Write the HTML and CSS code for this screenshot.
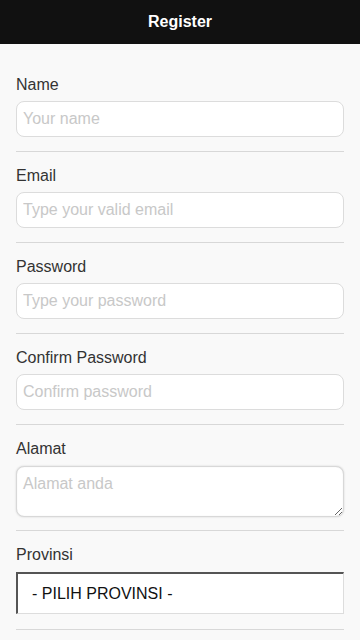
FILE: index.html
```html
<!DOCTYPE html>
<html>
<head>
<meta charset="utf-8">
<link rel="stylesheet" href="styles.css">
</head>
<body>
<header class="bar">Register</header>
<main class="form">
  <div class="field">
    <label class="label">Name</label>
    <input class="input" type="text" placeholder="Your name">
  </div>
  <div class="field">
    <label class="label">Email</label>
    <input class="input" type="text" placeholder="Type your valid email">
  </div>
  <div class="field">
    <label class="label">Password</label>
    <input class="input" type="password" placeholder="Type your password">
  </div>
  <div class="field">
    <label class="label">Confirm Password</label>
    <input class="input" type="password" placeholder="Confirm password">
  </div>
  <div class="field field-area">
    <label class="label">Alamat</label>
    <textarea class="area" placeholder="Alamat anda"></textarea>
  </div>
  <div class="field field-select">
    <label class="label">Provinsi</label>
    <div class="select">- PILIH PROVINSI -</div>
  </div>
</main>
</body>
</html>
```
FILE: styles.css
```css
html, body {
  margin: 0;
  padding: 0;
  background: #f9f9f9;
  font-family: "Liberation Sans", Arial, sans-serif;
  color: #333;
}
.bar {
  height: 44px;
  background: #111;
  color: #fff;
  font-weight: bold;
  font-size: 16px;
  display: flex;
  align-items: center;
  justify-content: center;
}
.form {
  padding: 17px 16px 0 16px;
}
.field {
  display: flex;
  flex-direction: column;
  padding: 14px 0 14px 0;
  border-bottom: 1px solid #d8d8d8;
}
.label {
  font-size: 16px;
  line-height: 20px;
  color: #333;
  margin-bottom: 6px;
}
.input, .area {
  box-sizing: border-box;
  width: 100%;
  height: 36px;
  margin: 0;
  border: 1px solid #dcdcdc;
  border-radius: 8px;
  background: #fff;
  font-family: "Liberation Sans", Arial, sans-serif;
  font-size: 16px;
  color: #333;
  padding: 0 6px;
  outline: none;
}
.input::placeholder, .area::placeholder {
  color: #c8c8c8;
}
.field-area {
  padding-bottom: 13px;
}
.area {
  height: 51px;
  margin-top: 1px;
  padding: 8px 6px;
  border: 1px solid #d8d8d8;
  box-shadow: 0 0 2px #d0d0d0, inset 0 0 1px #e0e0e0;
  resize: vertical;
  display: block;
}
.field-select {
  padding-bottom: 15px;
}
.select {
  box-sizing: border-box;
  height: 42px;
  margin-top: 1px;
  background: #fff;
  border-top: 2px solid #555;
  border-left: 2px solid #555;
  border-right: 1px solid #ddd;
  border-bottom: 1px solid #ddd;
  font-size: 16px;
  color: #111;
  padding-left: 14px;
  display: flex;
  align-items: center;
}
```
